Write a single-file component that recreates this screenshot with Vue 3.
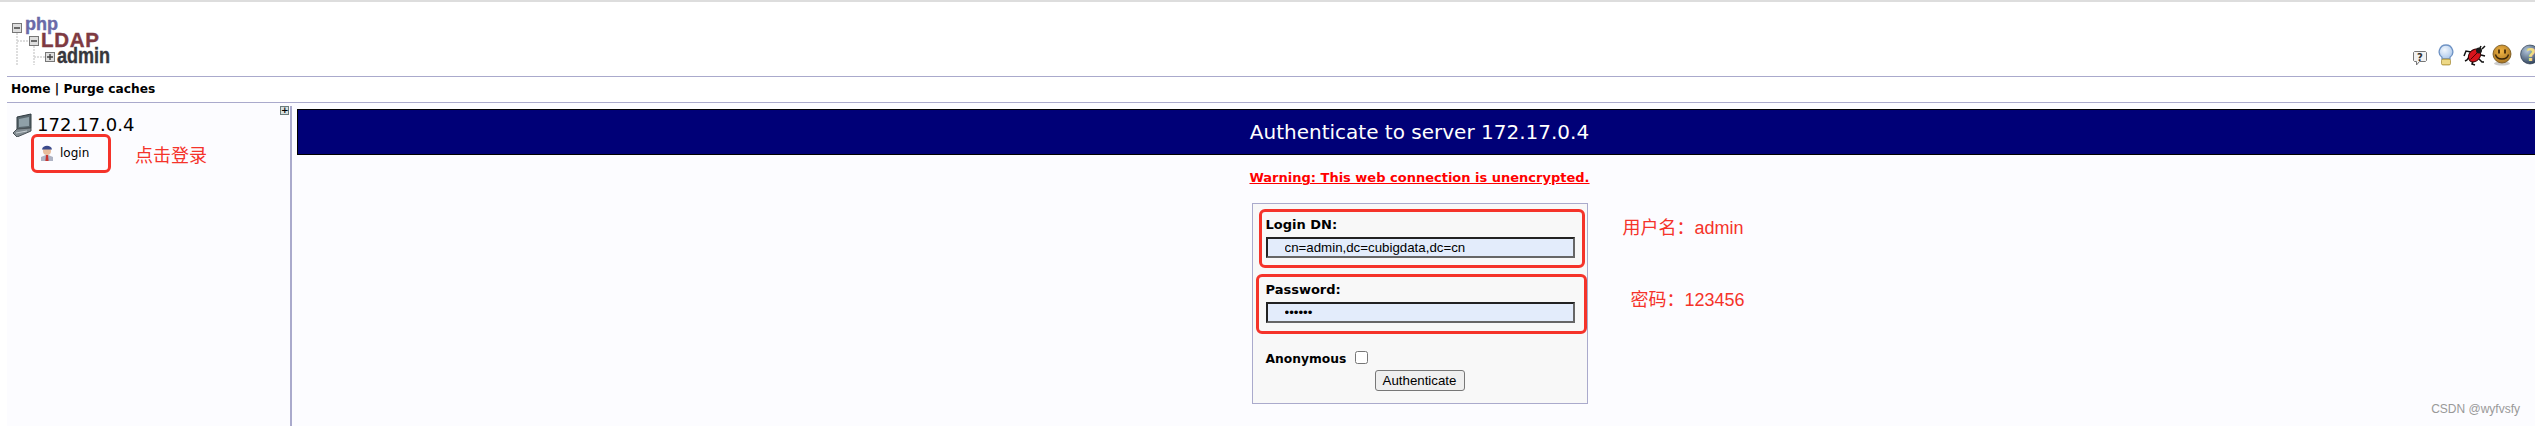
<template>
  <div class="page">
    <header class="top">
      <div class="logo" aria-label="phpLDAPadmin">
        <svg class="logo-tree" width="46" height="48" viewBox="0 0 46 48">
          <g fill="none" stroke="#d4d4d4" stroke-dasharray="2 1" stroke-width="1.500">
            <path d="M5 15V47M5 23H17M22 28V47M22 39H33" />
          </g>
          <g fill="#dedede" stroke="#777">
            <rect x="0.500" y="5.500" width="9" height="9" />
            <rect x="17.500" y="18.500" width="9" height="9" />
            <rect x="33.500" y="34.500" width="9" height="9" />
          </g>
          <path d="M2 10h6M19 23h6M35 39h6M38 36v6" stroke="#444" stroke-width="1.400" />
        </svg>
        <span class="logo-php">php</span>
        <span class="logo-ldap">LDAP</span>
        <span class="logo-admin">admin</span>
      </div>
      <div class="help-icons">
        <svg class="ic-bubble" width="16" height="16" viewBox="0 0 16 16">
          <path d="M2.500 1.500h11l1 1v8l-1 1h-6l-3 3.500v-3.500h-2l-1-1v-8z" fill="#f2f2f2" stroke="#777" />
          <text x="8" y="10.500" text-anchor="middle" class="q">?</text>
        </svg>
        <svg class="ic-bulb" width="16" height="22" viewBox="0 0 16 22">
          <defs>
            <radialGradient id="glass" cx="0.400" cy="0.350" r="0.700">
              <stop offset="0" stop-color="#f2f7fd" />
              <stop offset="1" stop-color="#a9c6ea" />
            </radialGradient>
          </defs>
          <path d="M8 1a6.800 6.800 0 0 0-4 12.300V15h8v-1.700A6.800 6.800 0 0 0 8 1z" fill="url(#glass)" stroke="#6f93c4" stroke-width="1.300" />
          <rect x="3.500" y="15" width="9" height="6" rx="1.500" fill="#dcbf5c" stroke="#a28a3a" stroke-width="0.700" />
          <path d="M4 17h8M4 19h8" stroke="#fff2b0" />
        </svg>
        <svg class="ic-bug" width="24" height="22" viewBox="0 0 24 22">
          <path d="M16 6 18 2M19 5l3-3M8 8 3 7 1 12M6 13l-2 3-2 1M10 17l-1 3 3 1M16 15l3 3 2 0M18 11l4 1" stroke="#111" stroke-width="1.500" fill="none" />
          <ellipse cx="11.500" cy="11.500" rx="5.500" ry="7" transform="rotate(40 11.500 11.500)" fill="#d8141c" stroke="#300" />
          <path d="M7.500 15.500 15.500 7.500" stroke="#500" />
          <circle cx="16" cy="6.500" r="3" fill="#1b1b1b" />
        </svg>
        <svg class="ic-smile" width="20" height="22" viewBox="0 0 20 22">
          <defs>
            <radialGradient id="face" cx="0.450" cy="0.350" r="0.750">
              <stop offset="0" stop-color="#f2b544" />
              <stop offset="1" stop-color="#9c6a1c" />
            </radialGradient>
          </defs>
          <ellipse cx="10" cy="19.500" rx="8" ry="2" fill="#ccc" />
          <circle cx="10" cy="10" r="9" fill="url(#face)" stroke="#70501a" stroke-width="0.800" />
          <path d="M7 5.500v4M13 5.500v4" stroke="#3a2508" stroke-width="1.700" />
          <path d="M3.500 10.500c1.500 6 11.500 6 13 0" fill="none" stroke="#3a2508" stroke-width="1.300" />
        </svg>
        <svg class="ic-help" width="20" height="22" viewBox="0 0 20 22">
          <defs>
            <radialGradient id="ball" cx="0.350" cy="0.300" r="0.800">
              <stop offset="0" stop-color="#b3c6dc" />
              <stop offset="1" stop-color="#23364f" />
            </radialGradient>
          </defs>
          <circle cx="10" cy="10.500" r="9.500" fill="url(#ball)" stroke="#1d2c40" stroke-width="0.600" />
          <text x="11" y="17" text-anchor="middle" class="q-big">?</text>
        </svg>
      </div>
    </header>

    <nav class="crumbs">Home | Purge caches</nav>

    <main class="body">
      <aside class="tree">
        <span class="tree-toggle">+</span>
        <div class="server">
          <svg width="20" height="24" viewBox="0 0 20 24">
            <path d="M5 4 19 1v14L5 16z" fill="#59666d" stroke="#2f3a40" />
            <path d="M7 6l10-2v9L7 14z" fill="#8fa0a8" />
            <path d="M1 20l4-4 14-1v3L5 24z" fill="#828c92" stroke="#4a5257" />
            <path d="M4 20l11-2" stroke="#c8cfd3" />
          </svg>
          <span>172.17.0.4</span>
        </div>
        <div class="login-link">
          <svg width="12" height="16" viewBox="0 0 12 16">
            <path d="M0 16v-4l6-2.500 6 2.500v4z" fill="#aeb3c4" />
            <path d="M5 10h2l.6 6H4.400z" fill="#c9332f" />
            <circle cx="6" cy="6" r="4" fill="#e8bd9c" />
            <path d="M1 4.500C1.500 -0.500 10.500 -0.500 11 4.500z" fill="#3b4a8c" />
          </svg>
          <span>login</span>
        </div>
        <div class="mark mark-login"></div>
        <span class="note note-login">点击登录</span>
      </aside>

      <section class="content">
        <h3 class="banner">Authenticate to server 172.17.0.4</h3>
        <p class="warning">Warning: This web connection is unencrypted.</p>

        <div class="form-row">
          <form class="login-form" @submit.prevent>
            <label class="field">
              <span>Login DN:</span>
              <input type="text" value="cn=admin,dc=cubigdata,dc=cn" />
            </label>
            <label class="field">
              <span>Password:</span>
              <input type="password" value="123456" />
            </label>
            <div class="anon">
              <span>Anonymous</span>
              <input type="checkbox" />
            </div>
            <button type="button">Authenticate</button>

            <div class="mark mark-dn"></div>
            <div class="mark mark-pw"></div>
            <span class="note note-dn">用户名：admin</span>
            <span class="note note-pw">密码：123456</span>
          </form>
        </div>
      </section>
    </main>

    <span class="watermark">CSDN @wyfvsfy</span>
  </div>
</template>

<script setup>
</script>

<style>
html,
body {
  margin: 0;
  background: #fff;
  overflow: hidden;
}
</style>

<style scoped>
.page {
  position: relative;
  width: 2535px;
  height: 426px;
  overflow: hidden;
  font-family: "DejaVu Sans", Verdana, sans-serif;
  color: #000;
  background: #fff;
  border-top: 2px solid #ddd;
  box-sizing: border-box;
  padding-left: 7px;
}

.top {
  height: 74px;
  display: flex;
  justify-content: space-between;
  align-items: flex-end;
  border-bottom: 1px solid #aaaacc;
}

.logo {
  position: relative;
  width: 110px;
  height: 60px;
  margin-bottom: 8px;
  font-family: "Liberation Sans", Arial, sans-serif;
  font-weight: 700;
  line-height: 0.750;
}

.logo-tree {
  position: absolute;
  left: 5px;
  top: 10px;
}

.logo-php,
.logo-ldap,
.logo-admin {
  position: absolute;
  white-space: nowrap;
  -webkit-text-stroke: 0.400px currentColor;
}

.logo-php {
  left: 18px;
  top: 10px;
  font-size: 18px;
  color: #6a6aa8;
}

.logo-ldap {
  left: 34px;
  top: 24px;
  font-size: 20.500px;
  letter-spacing: 0.700px;
  color: #7e3a42;
}

.logo-admin {
  left: 50px;
  top: 40px;
  font-size: 22px;
  color: #37373c;
  transform: scaleX(0.820);
  transform-origin: left center;
}

.help-icons {
  display: flex;
  align-items: flex-end;
  margin-right: -5px;
  margin-bottom: 10px;
  flex: none;
}

.ic-bulb {
  margin-left: 10px;
}

.ic-bug {
  margin-left: 9px;
}

.ic-smile {
  margin-left: 5px;
}

.ic-help {
  margin-left: 8px;
}

.q {
  font: 700 10px "DejaVu Sans", sans-serif;
  fill: #333;
}

.q-big {
  font: 700 17px "DejaVu Sans", sans-serif;
  fill: #f0dc82;
}

.crumbs {
  height: 26px;
  box-sizing: border-box;
  padding: 4px 4px 0;
  border-bottom: 1px solid #aaaacc;
  font-size: 12.200px;
  font-weight: 700;
  line-height: 16px;
}

.body {
  display: grid;
  grid-template-columns: 285px minmax(0, 1fr);
  height: 324px;
  background: #fcfcff;
}

.tree {
  position: relative;
  border-right: 2px solid #aaaacc;
  margin-top: 3px;
  padding: 7px 0 0 5px;
}

.tree-toggle {
  position: absolute;
  right: 1px;
  top: 0;
  width: 7px;
  height: 7px;
  box-sizing: content-box;
  border: 1px solid #6c7c7c;
  background: #d6e0e0;
  font: 700 9px/7px "DejaVu Sans", sans-serif;
  text-align: center;
}

.server {
  display: flex;
  align-items: center;
  gap: 5px;
  font-size: 18px;
  line-height: 24px;
}

.login-link {
  display: flex;
  align-items: center;
  gap: 7px;
  margin: 7px 0 0 29px;
  font-size: 12px;
  line-height: 18px;
}

.content {
  padding: 6px 0 0 5px;
  margin-right: -7px;
}

.banner {
  margin: 0;
  height: 46px;
  box-sizing: border-box;
  background: #000077;
  border: 1px solid #000;
  color: #fff;
  font-size: 20px;
  font-weight: 400;
  line-height: 44px;
  text-align: center;
}

.warning {
  margin: 14px 0 0;
  color: #f00;
  font-size: 13px;
  font-weight: 700;
  line-height: 17px;
  text-align: center;
  text-decoration: underline;
}

.form-row {
  display: flex;
  justify-content: center;
  margin-top: 17px;
}

.login-form {
  position: relative;
  width: 336px;
  height: 201px;
  box-sizing: border-box;
  padding: 12px 12px 0 13px;
  border: 1px solid #aaaacc;
  background: #f8f8f8;
}

.field {
  display: block;
  margin-bottom: 23px;
  font-size: 13px;
  font-weight: 700;
  line-height: 18px;
}

.field span {
  display: block;
  margin-bottom: 3px;
}

.field input {
  display: block;
  width: 309px;
  height: 21px;
  box-sizing: border-box;
  padding: 0 0 0 17px;
  border: 2px solid;
  border-color: #222 #666 #666 #222;
  background: #e3ecfb;
  font: 400 13.300px "Liberation Sans", Arial, sans-serif;
  color: #000;
  outline: none;
}

.anon {
  display: flex;
  align-items: center;
  gap: 9px;
  margin-top: 27px;
  font-size: 12.300px;
  font-weight: 700;
  line-height: 18px;
}

.anon input {
  width: 13px;
  height: 13px;
  margin: -4px 0 0;
}

button {
  display: block;
  width: 90px;
  height: 21px;
  margin: 2px 0 0 109px;
  padding: 0;
  border: 1px solid #777;
  border-radius: 3px;
  background: #efefef;
  font: 400 13.300px "Liberation Sans", Arial, sans-serif;
  color: #000;
}

/* red annotation marks over the screenshot */
.mark {
  position: absolute;
  box-sizing: border-box;
  border: 3px solid #f5332a;
  border-radius: 6px;
  pointer-events: none;
}

.mark-login {
  left: 24px;
  top: 28px;
  width: 80px;
  height: 39px;
}

.mark-dn {
  left: 6px;
  top: 5px;
  width: 326px;
  height: 59px;
}

.mark-pw {
  left: 3px;
  top: 70px;
  width: 331px;
  height: 60px;
}

.note {
  position: absolute;
  color: #f5332a;
  font: 400 18px/22px "Liberation Sans", "Noto Sans CJK SC", sans-serif;
  white-space: nowrap;
}

.note-login {
  left: 128px;
  top: 39px;
}

.note-dn {
  left: 370px;
  top: 13px;
}

.note-pw {
  left: 378px;
  top: 85px;
}

.watermark {
  position: absolute;
  right: 15px;
  bottom: 9px;
  color: #999;
  font: 400 12px/16px "Liberation Sans", Arial, sans-serif;
}
</style>
